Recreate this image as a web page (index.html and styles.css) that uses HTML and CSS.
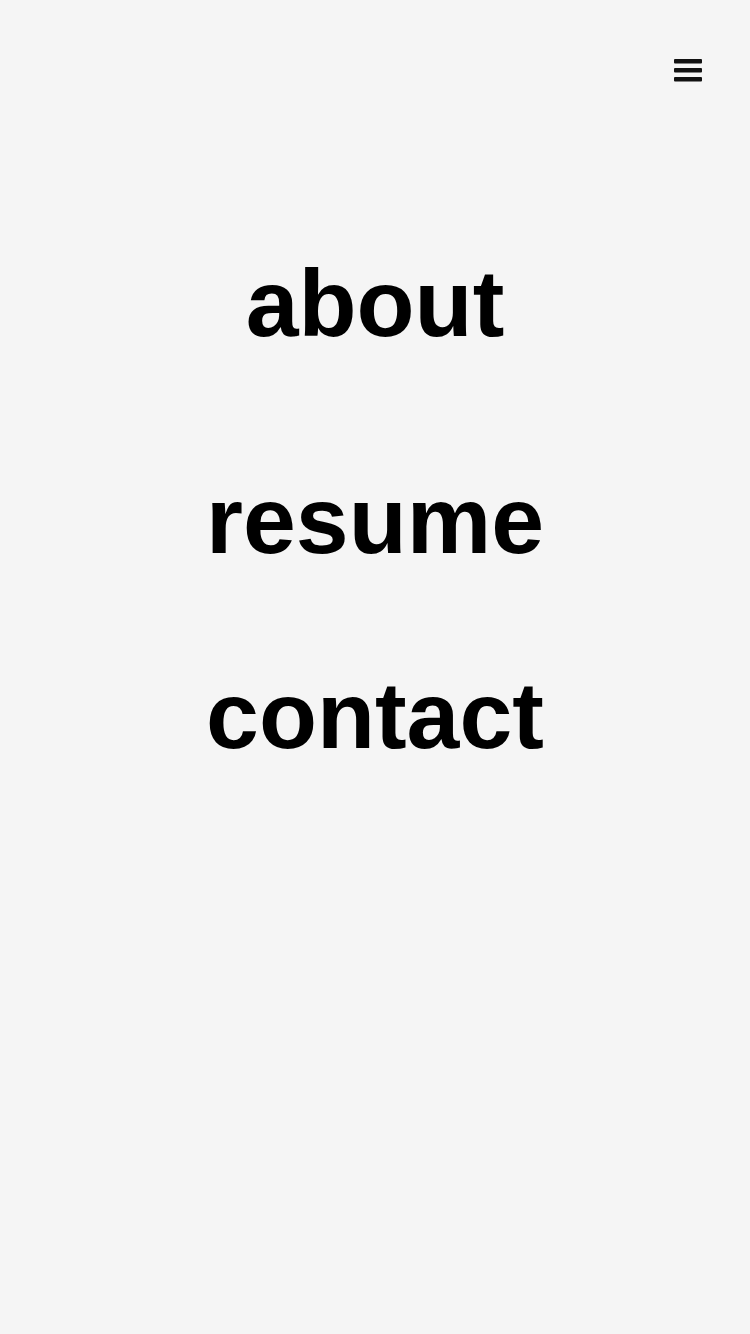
FILE: index.html
```html
<!DOCTYPE html>
<html lang="en">
<head>
<meta charset="utf-8">
<title>Menu</title>
<link rel="stylesheet" href="styles.css">
</head>
<body>
<header class="topbar">
  <button class="menu-btn" aria-label="Menu">
    <svg class="menu-icon" width="28" height="23" viewBox="0 0 28 23">
      <rect x="0" y="0" width="28" height="4.5" rx="1"/>
      <rect x="0" y="9" width="28" height="4.5" rx="1"/>
      <rect x="0" y="18" width="28" height="4.5" rx="1"/>
    </svg>
  </button>
</header>
<nav class="menu">
  <a class="menu-item item-about" href="#">about</a>
  <a class="menu-item item-resume" href="#">resume</a>
  <a class="menu-item item-contact" href="#">contact</a>
</nav>
</body>
</html>
```
FILE: styles.css
```css
html, body {
  margin: 0;
  padding: 0;
  background: #f5f5f5;
}
body {
  font-family: "Liberation Sans", Arial, sans-serif;
  color: #000;
  min-height: 1334px;
}
.topbar {
  display: flex;
  justify-content: flex-end;
  padding: 59px 48px 0 0;
}
.menu-btn {
  border: 0;
  background: none;
  padding: 0;
  margin: 0;
  display: block;
  line-height: 0;
}
.menu-icon {
  display: block;
  fill: #111;
}
.menu {
  display: flex;
  flex-direction: column;
  align-items: center;
  margin-top: 166px;
}
.menu-item {
  display: block;
  font-size: 95px;
  font-weight: 700;
  line-height: 110px;
  color: #000;
  text-decoration: none;
}
.item-about {
  margin-bottom: 107px;
}
.item-resume {
  margin-bottom: 85px;
}
```
